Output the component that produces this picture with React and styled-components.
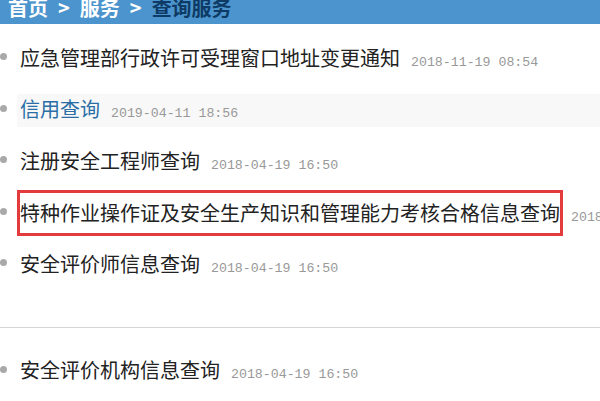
import React from 'react';
import styled, { createGlobalStyle } from 'styled-components';

const GlobalStyle = createGlobalStyle`
  html, body {
    margin: 0;
    padding: 0;
    background: #fff;
  }
  body {
    font-family: "Noto Sans CJK SC", "Noto Sans", sans-serif;
    width: 600px;
    height: 401px;
    overflow: hidden;
  }
`;

const Page = styled.div`
  width: 600px;
  height: 401px;
  overflow: hidden;
`;

const Header = styled.div`
  height: 24px;
  background: #4b94cd;
  display: flex;
  align-items: flex-end;
  gap: 10px;
  padding: 0 0 6px 8px;
  box-sizing: border-box;
  overflow: hidden;
`;

const Crumb = styled.span`
  font-size: 20px;
  line-height: 20px;
  font-weight: 700;
  color: ${p => (p.current ? '#0d3b66' : '#fff')};
`;

const List = styled.ul`
  list-style: none;
  margin: 0;
  padding: ${p => p.top}px 0 0 0;
`;

const Row = styled.li`
  height: 51.5px;
  display: flex;
  align-items: center;
`;

const Bullet = styled.span`
  flex: none;
  width: 7px;
  height: 7px;
  border-radius: 50%;
  background: #a9a9a9;
  margin: -4px 10px 0 0;
`;

const Body = styled.div`
  flex: 1;
  display: flex;
  align-items: baseline;
  padding: 5.5px 0 5.5px 3px;
  background: ${p => (p.active ? '#f8f8f8' : 'transparent')};
  white-space: nowrap;
  overflow: visible;
`;

const Title = styled.span`
  display: inline-block;
  font-size: 20px;
  line-height: 20px;
  color: ${p => (p.active ? '#2a6ea5' : '#222')};
  padding: ${p => (p.marked ? '10px 0' : '0')};
  outline: ${p => (p.marked ? '3px solid #e33b3b' : 'none')};
`;

const Date = styled.span`
  font-family: "Liberation Mono", "DejaVu Sans Mono", monospace;
  font-size: 13.25px;
  color: #999;
  margin-left: 11px;
`;

const Divider = styled.hr`
  border: none;
  border-top: 1px solid #d6d6d6;
  margin: 36px 0 0 0;
`;

const items = [
  { title: '应急管理部行政许可受理窗口地址变更通知', date: '2018-11-19 08:54' },
  { title: '信用查询', date: '2019-04-11 18:56', active: true },
  { title: '注册安全工程师查询', date: '2018-04-19 16:50' },
  { title: '特种作业操作证及安全生产知识和管理能力考核合格信息查询', date: '2018-04-19 16:50', marked: true },
  { title: '安全评价师信息查询', date: '2018-04-19 16:50' },
];

const Item = ({ title, date, active, marked }) => (
  <Row>
    <Bullet />
    <Body active={active}>
      <Title active={active} marked={marked}>{title}</Title>
      <Date>{date}</Date>
    </Body>
  </Row>
);

export default function App() {
  return (
    <Page>
      <GlobalStyle />
      <Header>
        <Crumb>首页</Crumb>
        <Crumb>&gt;</Crumb>
        <Crumb>服务</Crumb>
        <Crumb>&gt;</Crumb>
        <Crumb current>查询服务</Crumb>
      </Header>
      <List top={9}>
        {items.map(it => (
          <Item key={it.title} {...it} />
        ))}
      </List>
      <Divider />
      <List top={18}>
        <Item title="安全评价机构信息查询" date="2018-04-19 16:50" />
      </List>
    </Page>
  );
}
